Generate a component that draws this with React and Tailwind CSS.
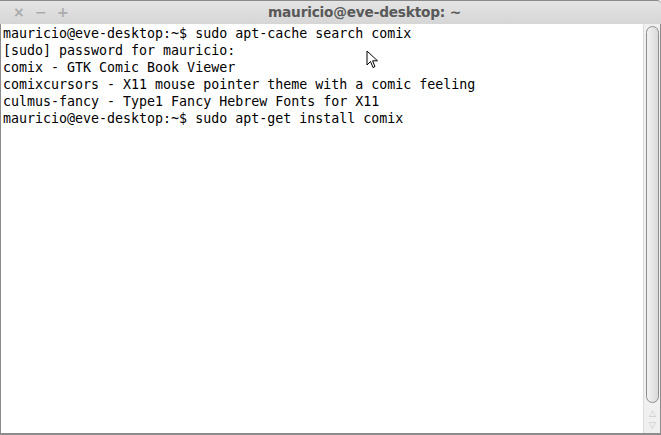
export default function App() {
  const lines = [
    'mauricio@eve-desktop:~$ sudo apt-cache search comix',
    '[sudo] password for mauricio:',
    'comix - GTK Comic Book Viewer',
    'comixcursors - X11 mouse pointer theme with a comic feeling',
    'culmus-fancy - Type1 Fancy Hebrew Fonts for X11',
    'mauricio@eve-desktop:~$ sudo apt-get install comix',
  ];

  return (
    <div className="w-[661px] h-[435px] flex flex-col bg-white overflow-hidden">
      {/* barra de titulo */}
      <div className="h-[24px] shrink-0 flex items-center bg-gradient-to-b from-[#e4e4e4] to-[#d6d6d6] border-t border-t-[#8a8a8a] rounded-tr-[4px] relative">
        <div className="flex items-center gap-[11px] pl-[13px] text-[#ababab] text-[14px] font-bold font-['DejaVu_Sans',sans-serif]">
          <span className="w-[11px] text-center">×</span>
          <span className="w-[11px] text-center">−</span>
          <span className="w-[11px] text-center">+</span>
        </div>
        <div className="ml-[200px] text-[13.7px] font-bold text-[#595959] font-['DejaVu_Sans',sans-serif] tracking-[-0.2px]">
          mauricio@eve-desktop: ~
        </div>
      </div>

      {/* terminal */}
      <div className="flex-1 flex border-l border-l-[#8c8c8c] border-b-2 border-b-[#8c8c8c] border-r border-r-[#8c8c8c] relative">
        <div className="flex-1 pl-[2px] pt-[1px] font-['DejaVu_Sans_Mono',monospace] text-[13.3px] leading-[17px] text-black whitespace-pre">
          {lines.map((l, i) => (
            <div key={i}>{l}</div>
          ))}
        </div>

        {/* scrollbar */}
        <div className="w-[17px] shrink-0 flex flex-col items-center bg-[#f0f0f0] border-l border-l-[#dcdcdc] pt-[2px] pb-[2px]">
          <div className="w-[13px] h-[377px] rounded-t-[7px] rounded-b-[7px] border border-[#8f8f8f] bg-gradient-to-r from-[#f2f2f2] to-[#d9d9d9]" />
          <div className="flex flex-col items-center mt-[4px] text-[#c4c4c4] text-[9px] leading-[12px]">
            <span>△</span>
            <span>▽</span>
          </div>
        </div>

        {/* cursor */}
        <svg className="absolute left-[365px] top-[26px]" width="13" height="20" viewBox="0 0 13 20">
          <path d="M1 1 L1 15 L4.5 11.5 L7 17.5 L9 16.6 L6.6 10.8 L11.5 10.8 Z" fill="white" stroke="black" strokeWidth="1" strokeLinejoin="miter" />
        </svg>
      </div>
    </div>
  );
}
